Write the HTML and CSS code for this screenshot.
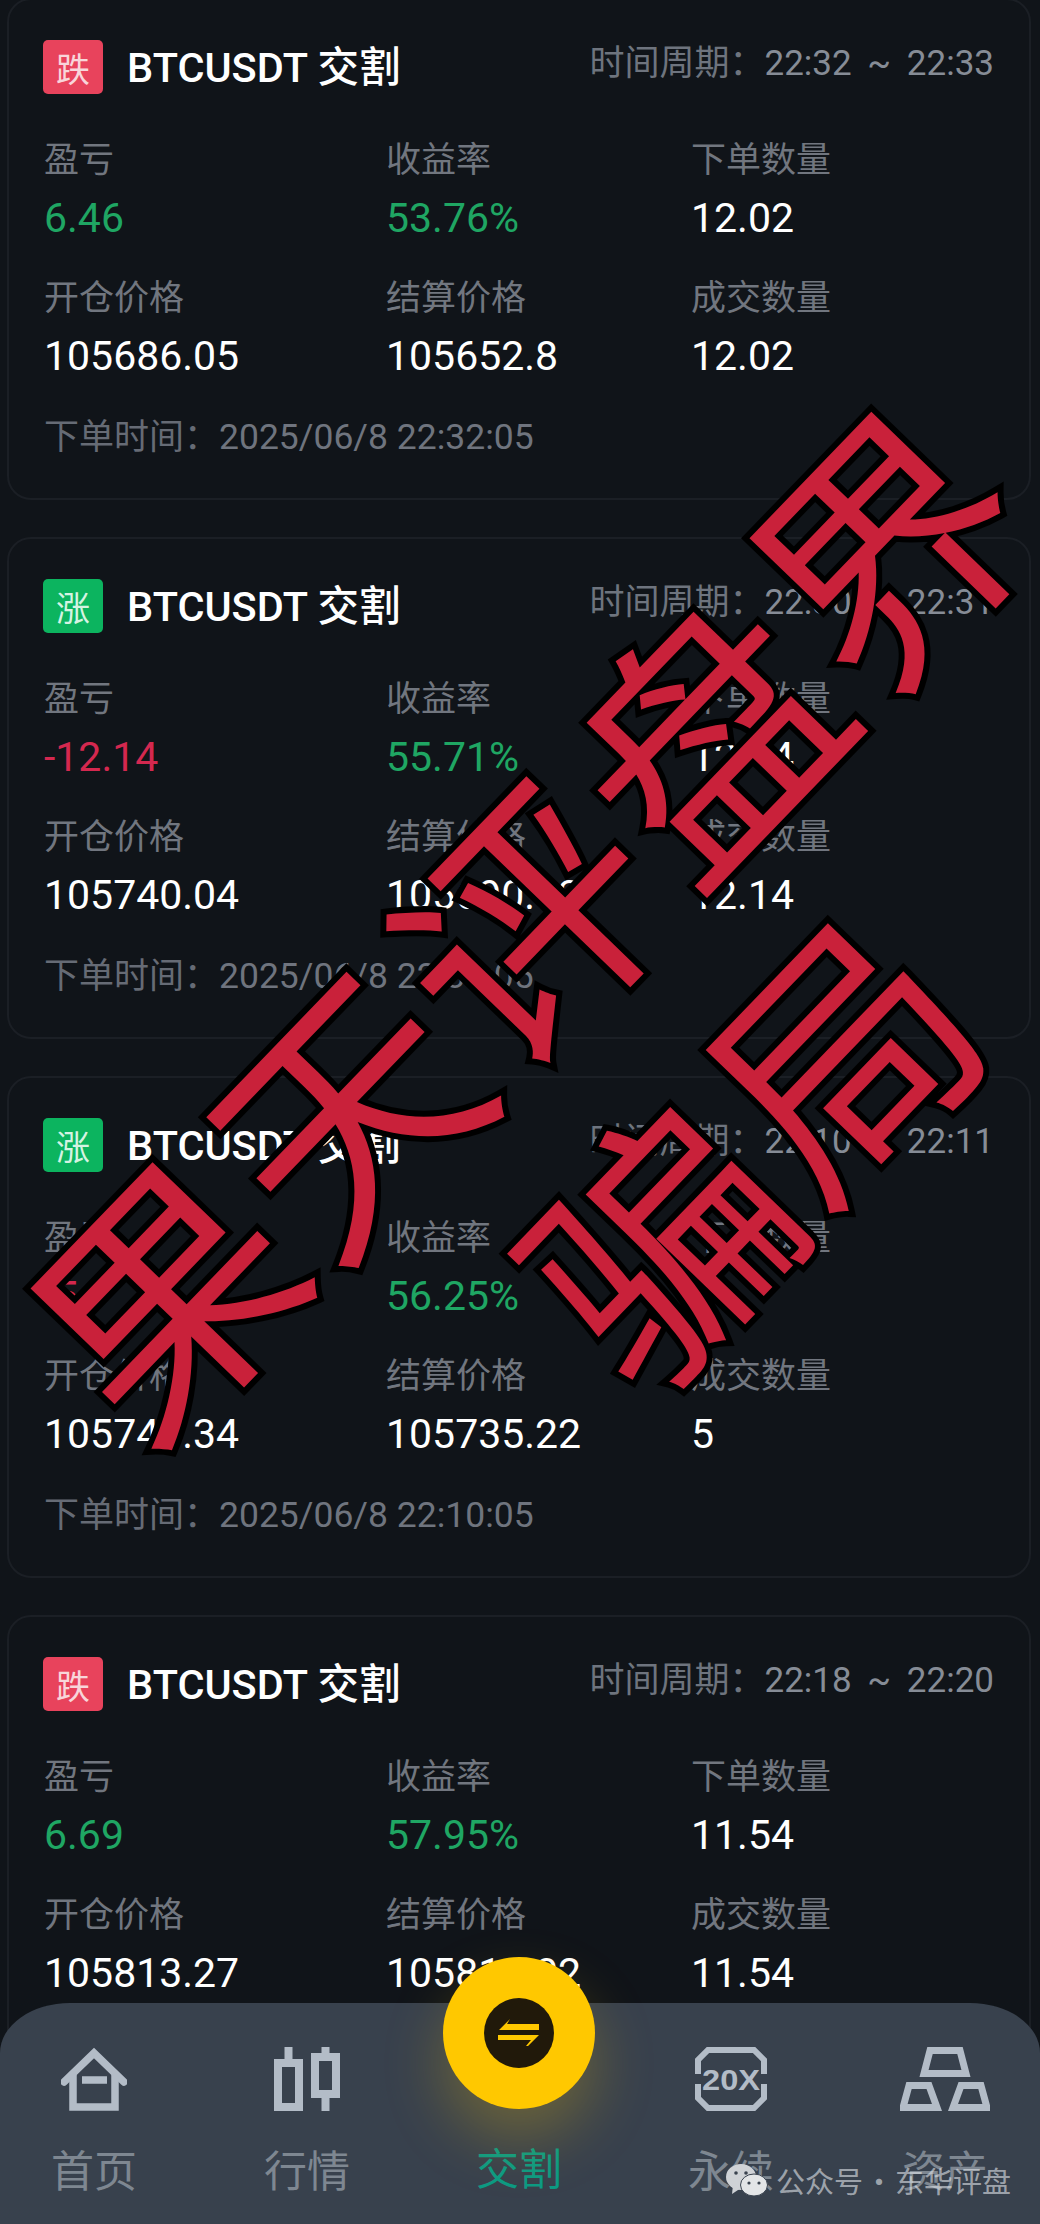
FILE: index.html
```html
<!DOCTYPE html>
<html lang="zh-CN">
<head>
    <meta charset="UTF-8">
    <meta name="viewport" content="width=device-width, initial-scale=1.0">
    <title>交割订单</title>
    <link rel="stylesheet" href="styles.css">
</head>
<body>
    <div class="order-list">
        <div class="order-card">
            <div class="card-head">
                <span class="tag tag-down">跌</span>
                <span class="pair">BTCUSDT 交割</span>
                <span class="period">时间周期：<span class="period-num">22:32 ~ 22:33</span></span>
            </div>
            <div class="card-grid">
                <div class="cell"><span class="label">盈亏</span><span class="value up">6.46</span></div>
                <div class="cell"><span class="label">收益率</span><span class="value up">53.76%</span></div>
                <div class="cell"><span class="label">下单数量</span><span class="value">12.02</span></div>
                <div class="cell"><span class="label">开仓价格</span><span class="value">105686.05</span></div>
                <div class="cell"><span class="label">结算价格</span><span class="value">105652.8</span></div>
                <div class="cell"><span class="label">成交数量</span><span class="value">12.02</span></div>
            </div>
            <div class="order-time">下单时间：<span class="time-num">2025/06/8 22:32:05</span></div>
        </div>

        <div class="order-card">
            <div class="card-head">
                <span class="tag tag-up">涨</span>
                <span class="pair">BTCUSDT 交割</span>
                <span class="period">时间周期：<span class="period-num">22:30 ~ 22:31</span></span>
            </div>
            <div class="card-grid">
                <div class="cell"><span class="label">盈亏</span><span class="value down">-12.14</span></div>
                <div class="cell"><span class="label">收益率</span><span class="value up">55.71%</span></div>
                <div class="cell"><span class="label">下单数量</span><span class="value">12.14</span></div>
                <div class="cell"><span class="label">开仓价格</span><span class="value">105740.04</span></div>
                <div class="cell"><span class="label">结算价格</span><span class="value">105690.32</span></div>
                <div class="cell"><span class="label">成交数量</span><span class="value">12.14</span></div>
            </div>
            <div class="order-time">下单时间：<span class="time-num">2025/06/8 22:30:05</span></div>
        </div>

        <div class="order-card">
            <div class="card-head">
                <span class="tag tag-up">涨</span>
                <span class="pair">BTCUSDT 交割</span>
                <span class="period">时间周期：<span class="period-num">22:10 ~ 22:11</span></span>
            </div>
            <div class="card-grid">
                <div class="cell"><span class="label">盈亏</span><span class="value down">-5</span></div>
                <div class="cell"><span class="label">收益率</span><span class="value up">56.25%</span></div>
                <div class="cell"><span class="label">下单数量</span><span class="value">5</span></div>
                <div class="cell"><span class="label">开仓价格</span><span class="value">105744.34</span></div>
                <div class="cell"><span class="label">结算价格</span><span class="value">105735.22</span></div>
                <div class="cell"><span class="label">成交数量</span><span class="value">5</span></div>
            </div>
            <div class="order-time">下单时间：<span class="time-num">2025/06/8 22:10:05</span></div>
        </div>

        <div class="order-card">
            <div class="card-head">
                <span class="tag tag-down">跌</span>
                <span class="pair">BTCUSDT 交割</span>
                <span class="period">时间周期：<span class="period-num">22:18 ~ 22:20</span></span>
            </div>
            <div class="card-grid">
                <div class="cell"><span class="label">盈亏</span><span class="value up">6.69</span></div>
                <div class="cell"><span class="label">收益率</span><span class="value up">57.95%</span></div>
                <div class="cell"><span class="label">下单数量</span><span class="value">11.54</span></div>
                <div class="cell"><span class="label">开仓价格</span><span class="value">105813.27</span></div>
                <div class="cell"><span class="label">结算价格</span><span class="value">105811.02</span></div>
                <div class="cell"><span class="label">成交数量</span><span class="value">11.54</span></div>
            </div>
            <div class="order-time">下单时间：<span class="time-num">2025/06/8 22:18:05</span></div>
        </div>
    </div>

    <!-- Red stamp text pasted over the screenshot -->
    <div class="stamp stamp-one">果天评盘界</div>
    <div class="stamp stamp-two">骗局</div>

    <nav class="tab-bar">
        <div class="tab">
            <svg class="tab-icon" width="66" height="64" viewBox="0 0 66 64" fill="none" stroke="#b3bcc7" stroke-width="7.5">
                <path d="M3 35 L33 6 L63 35" stroke-linecap="round"/>
                <path d="M12 28 V60 H54 V28"/>
                <path d="M21 33 H46"/>
            </svg>
            <span class="tab-label">首页</span>
        </div>
        <div class="tab">
            <svg class="tab-icon" width="66" height="64" viewBox="0 0 66 64" fill="none" stroke="#b3bcc7" stroke-width="8">
                <rect x="4" y="16" width="21" height="44"/>
                <path d="M14.5 0 V14"/>
                <rect x="41" y="10" width="21" height="37"/>
                <path d="M51.5 0 V10 M51.5 47 V64"/>
            </svg>
            <span class="tab-label">行情</span>
        </div>
        <div class="tab">
            <div class="swap-btn">
                <div class="swap-inner">
                    <svg width="42" height="28" viewBox="0 0 42 28" fill="#ffc800">
                        <path d="M12 0 L1 11 H41 V5 H9 Z"/>
                        <path d="M0 16 H41 L30 27 H28 L33 21 H0 Z"/>
                    </svg>
                </div>
            </div>
            <div class="tab-icon-blank"></div>
            <span class="tab-label tab-active">交割</span>
        </div>
        <div class="tab">
            <svg class="tab-icon" width="72" height="64" viewBox="0 0 72 64" fill="none" stroke="#b3bcc7" stroke-width="6">
                <path d="M3 27 V13 L13 3 H59 L69 13 V27"/>
                <path d="M3 37 V51 L13 61 H59 L69 51 V37"/>
                <text class="leverage" x="7" y="43" textLength="58" lengthAdjust="spacingAndGlyphs" fill="#b3bcc7" stroke="none">20X</text>
            </svg>
            <span class="tab-label">永续</span>
        </div>
        <div class="tab">
            <svg class="tab-icon" width="90" height="64" viewBox="0 0 90 64" fill="none" stroke="#b3bcc7" stroke-width="7" stroke-linejoin="miter">
                <path d="M30 3.5 H60 L66 26.5 H24 Z"/>
                <path d="M9 38.5 H29 L37 60.5 H3 Z"/>
                <path d="M61 38.5 H81 L87 60.5 H53 Z"/>
            </svg>
            <span class="tab-label">资产</span>
        </div>
    </nav>

    <div class="watermark">
        <svg width="42" height="34" viewBox="0 0 42 34">
            <ellipse cx="15" cy="14" rx="15" ry="13" fill="#cfd2d6"/>
            <path d="M7 22 L6 31 L15 25 Z" fill="#cfd2d6"/>
            <ellipse cx="28" cy="22" rx="13.500" ry="11" fill="#e3e5e7" stroke="#3a434f" stroke-width="1"/>
            <circle cx="10" cy="10" r="1.800" fill="#3a434f"/>
            <circle cx="20" cy="10" r="1.800" fill="#3a434f"/>
            <circle cx="23" cy="20" r="1.600" fill="#3a434f"/>
            <circle cx="33" cy="20" r="1.600" fill="#3a434f"/>
        </svg>
        <span>公众号 · 东华评盘</span>
    </div>
</body>
</html>
```

FILE: styles.css
```css
* {
    box-sizing: border-box;
}

html, body {
    margin: 0;
    padding: 0;
}

body {
    position: relative;
    width: 1040px;
    height: 2224px;
    overflow: hidden;
    background: #101419;
    font-family: Roboto, "Noto Sans CJK SC", sans-serif;
    color: #ffffff;
}

/* Order cards */
.order-list {
    display: flex;
    flex-direction: column;
    gap: 37px;
    margin-top: -2px;
    padding: 0 9px 0 7px;
}

.order-card {
    padding: 40px 35px 39px 35px;
    border: 2px solid #1b1f25;
    border-radius: 24px;
}

.card-head {
    display: flex;
    align-items: center;
    height: 54px;
}

.tag {
    display: flex;
    align-items: center;
    justify-content: center;
    width: 60px;
    height: 54px;
    margin-left: -1px;
    border-radius: 5px;
    font-size: 34px;
}

.tag-down {
    background: #e8435c;
    color: #f8d5da;
}

.tag-up {
    background: #0cb45f;
    color: #d5f3e2;
}

.pair {
    margin-left: 24px;
    margin-bottom: 6px;
    font-size: 41.5px;
    font-weight: 500;
}

.period {
    margin-left: auto;
    margin-bottom: 15px;
    font-size: 35px;
    color: #6e747e;
}

.period-num {
    word-spacing: 7px;
    color: #868c96;
}

.card-grid {
    display: grid;
    grid-template-columns: 342px 305px 1fr;
    row-gap: 34px;
    margin-top: 45px;
}

.cell {
    display: flex;
    flex-direction: column;
    gap: 10px;
}

.label {
    height: 44px;
    line-height: 44px;
    font-size: 35px;
    color: #71767f;
}

.value {
    height: 50px;
    line-height: 50px;
    font-size: 41px;
    color: #ffffff;
}

.up {
    color: #1fa663;
}

.down {
    color: #d4284f;
}

.order-time {
    margin-top: 34px;
    height: 44px;
    line-height: 44px;
    font-size: 35px;
    color: #666b75;
}

.time-num {
    font-size: 35.5px;
    color: #6f747e;
}

/* Stamp overlay */
.stamp {
    position: absolute;
    font-family: "Noto Sans CJK SC", sans-serif;
    font-size: 255px;
    font-weight: 400;
    line-height: 1;
    letter-spacing: 5px;
    white-space: nowrap;
    color: #c9213a;
    -webkit-text-stroke: 12px #000000;
    paint-order: stroke fill;
    transform: translate(-50%, -50%) rotate(-46deg);
}

.stamp-one {
    left: 519px;
    top: 913px;
}

.stamp-two {
    left: 743px;
    top: 1140px;
}

/* Bottom tab bar */
.tab-bar {
    position: absolute;
    left: 0;
    right: 0;
    bottom: 0;
    height: 221px;
    display: grid;
    grid-template-columns: 188px 238px 186px 238px 190px;
    padding-top: 44px;
    background: #38414d;
    border-radius: 70px 70px 0 0 / 50px 50px 0 0;
}

.tab {
    position: relative;
    display: flex;
    flex-direction: column;
    align-items: center;
}

.tab-icon {
    display: block;
}

.tab-icon-blank {
    height: 64px;
}

.leverage {
    font-family: "Liberation Sans", sans-serif;
    font-size: 29px;
    font-weight: 700;
}

.tab-label {
    margin-top: 33px;
    height: 56px;
    line-height: 56px;
    font-size: 43px;
    color: #7e8791;
}

.tab-active {
    margin-top: 31px;
    color: #0c9a83;
}

.swap-btn {
    position: absolute;
    left: 50%;
    top: -90px;
    width: 152px;
    height: 152px;
    margin-left: -76px;
    display: flex;
    align-items: center;
    justify-content: center;
    background: #ffc800;
    border-radius: 50%;
    box-shadow: 0 30px 60px rgba(255, 200, 0, 0.25);
}

.swap-inner {
    width: 70px;
    height: 70px;
    display: flex;
    align-items: center;
    justify-content: center;
    background: #21190a;
    border-radius: 50%;
}

/* Source watermark */
.watermark {
    position: absolute;
    left: 726px;
    top: 2162px;
    display: flex;
    align-items: center;
    gap: 8px;
    font-family: "Noto Sans CJK SC", sans-serif;
    font-size: 29px;
    line-height: 36px;
    word-spacing: -5px;
    color: rgba(226, 230, 235, 0.62);
}
```
